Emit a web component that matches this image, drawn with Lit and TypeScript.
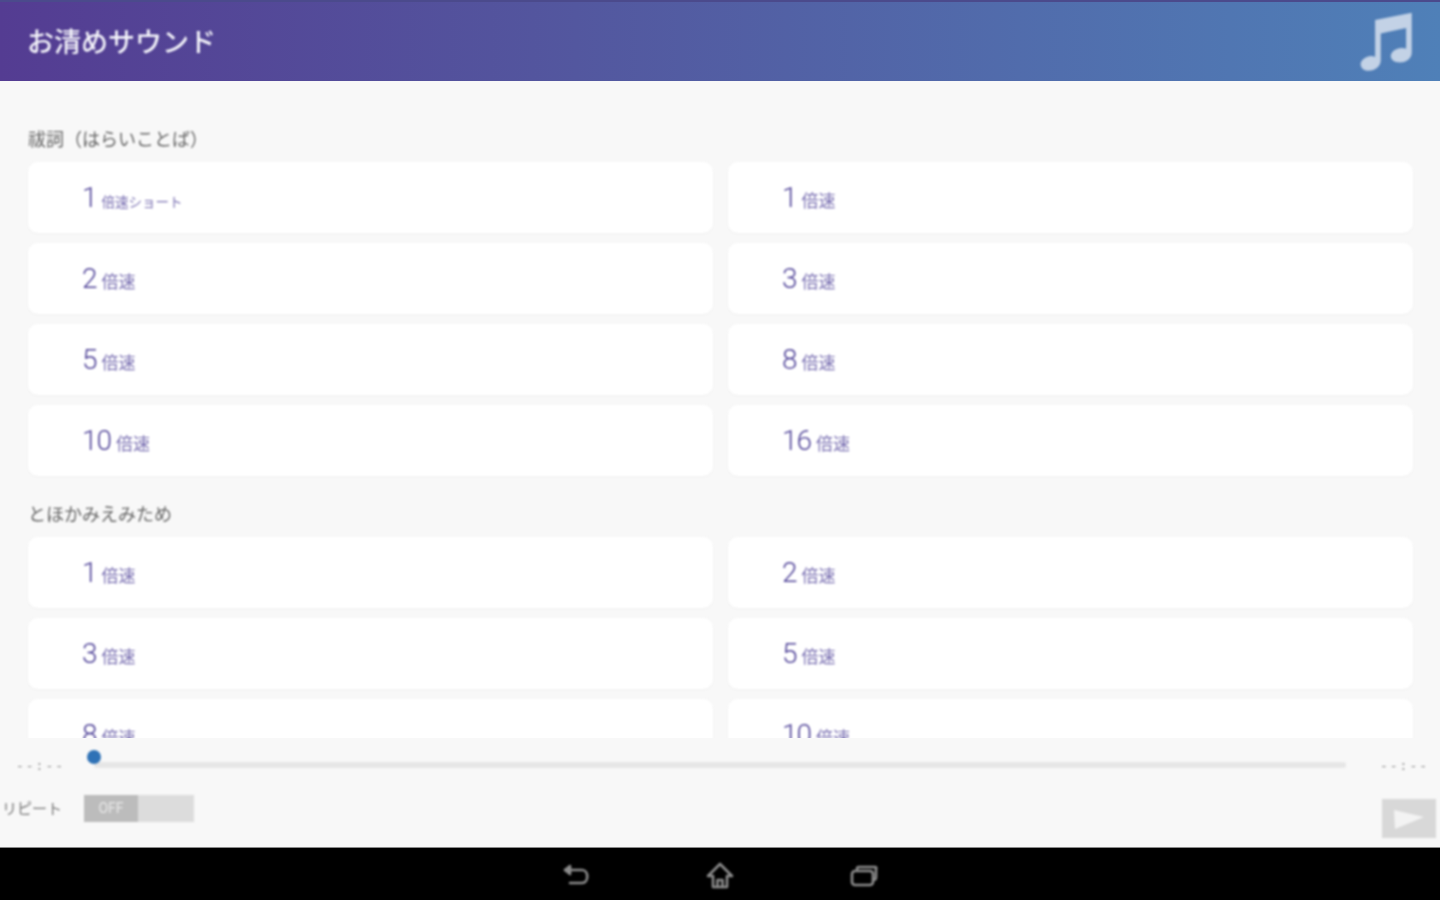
import { LitElement, html, css } from "lit";
import { customElement } from "lit/decorators.js";

type Item = { n: string; u: string; short?: boolean };
const sections: { title: string; items: Item[] }[] = [
  {
    title: "祓詞（はらいことば）",
    items: [
      { n: "1", u: "倍速ショート", short: true },
      { n: "1", u: "倍速" },
      { n: "2", u: "倍速" },
      { n: "3", u: "倍速" },
      { n: "5", u: "倍速" },
      { n: "8", u: "倍速" },
      { n: "10", u: "倍速" },
      { n: "16", u: "倍速" },
    ],
  },
  {
    title: "とほかみえみため",
    items: [
      { n: "1", u: "倍速" },
      { n: "2", u: "倍速" },
      { n: "3", u: "倍速" },
      { n: "5", u: "倍速" },
      { n: "8", u: "倍速" },
      { n: "10", u: "倍速" },
    ],
  },
];

@customElement("app-root")
export class AppRoot extends LitElement {
  static styles = css`
    :host {
      display: block;
      width: 1440px;
      height: 900px;
      overflow: hidden;
      font-family: "Noto Sans CJK JP", "Roboto", sans-serif;
      background: #f8f8f8;
    }
    .screen {
      display: flex;
      flex-direction: column;
      height: 900px;
    }
    .soft {
      filter: blur(0.8px);
    }
    .header {
      flex: 0 0 81px;
      box-sizing: border-box;
      display: flex;
      align-items: center;
      justify-content: space-between;
      padding: 0 24px 0 27px;
      background: linear-gradient(90deg, #543c92 0%, #53579f 40%, #4f80b8 100%);
      border-top: 2px solid #4b4a8c;
      color: #f4f4fa;
      font-size: 27px;
      font-weight: 500;
    }
    .header span {
      position: relative;
      top: -1px;
    }
    .note {
      width: 58px;
      height: 62px;
      display: block;
    }
    .list {
      flex: 0 0 657px;
      overflow: hidden;
      box-sizing: border-box;
      padding: 43px 27px 0 28px;
    }
    .title {
      height: 28px;
      line-height: 28px;
      font-size: 18px;
      color: #666;
      margin-bottom: 10px;
    }
    .grid {
      display: grid;
      grid-template-columns: 685px 685px;
      column-gap: 15px;
      row-gap: 10px;
      margin-bottom: 23px;
    }
    .card {
      height: 71px;
      background: #fff;
      border-radius: 10px;
      display: flex;
      align-items: center;
      padding-left: 54px;
      color: #4e4197;
      box-shadow: 0 1px 3px rgba(0, 0, 0, 0.03);
    }
    .n {
      font-family: "Roboto", sans-serif;
      font-weight: 300;
      font-size: 28px;
      letter-spacing: -1px;
      line-height: 36px;
      margin-right: 2px;
    }
    .u {
      font-size: 17px;
      line-height: 20px;
      color: #7a70b2;
      position: relative;
      top: 2px;
      margin-left: 3px;
    }
    .u.short {
      font-size: 13.5px;
      top: 3.5px;
      margin-left: 3px;
    }
    .controls {
      flex: 0 0 109px;
      display: flex;
      flex-direction: column;
    }
    .seek {
      height: 57px;
      display: flex;
      align-items: flex-start;
      padding: 20px 14px 0 16px;
      box-sizing: border-box;
    }
    .time {
      width: 46px;
      font-size: 13px;
      letter-spacing: 2px;
      color: #8e8e8e;
      line-height: 18px;
      white-space: nowrap;
      font-family: "Liberation Mono", monospace;
      overflow: hidden;
    }
    .track {
      flex: 1;
      margin: 4px 34px 0 32px;
      height: 6px;
      border-radius: 3px;
      background: #e6e6e6;
      position: relative;
    }
    .knob {
      position: absolute;
      left: -7px;
      top: -12px;
      width: 14px;
      height: 14px;
      border-radius: 50%;
      background: #2f72b6;
    }
    .row {
      flex: 1;
      display: flex;
      align-items: flex-start;
      padding-right: 4px;
    }
    .repeat {
      width: 84px;
      box-sizing: border-box;
      padding-left: 2px;
      font-size: 15px;
      color: #777;
      line-height: 26px;
      white-space: nowrap;
    }
    .toggle {
      width: 110px;
      height: 27px;
      background: #dcdcdc;
      display: flex;
    }
    .off {
      width: 54px;
      background: #bcbcbc;
      color: #e9e9e9;
      font-size: 14px;
      text-align: center;
      line-height: 27px;
      font-family: "Roboto", sans-serif;
    }
    .spacer {
      flex: 1;
    }
    .play {
      width: 54px;
      height: 39px;
      margin-top: 4px;
      background: #d8d8d8;
      display: flex;
      align-items: center;
      justify-content: center;
    }
    .play svg {
      display: block;
    }
    .nav {
      flex: 0 0 53px;
      background: #000;
      border-top: 1px solid #8a8a8a;
      box-sizing: border-box;
      display: flex;
      align-items: center;
      justify-content: center;
      gap: 114px;
    }
    .nav svg {
      display: block;
      width: 30px;
      height: 30px;
      position: relative;
      top: 2px;
      fill: none;
      stroke: #8c8c8c;
      stroke-width: 2.6;
      stroke-linejoin: round;
      stroke-linecap: round;
    }
  `;

  render() {
    return html`
      <div class="screen">
        <header class="header">
          <span class="soft">お清めサウンド</span>
          <svg class="note soft" viewBox="0 0 58 62">
            <path
              fill="#c3d2e6"
              d="M15 10 L54 2 V46 C54 54 46 58 39 57 C32 56 30 50 33 46 C36 42 43 40 48 42 V19 L21 25 V55 C21 62 13 68 5 66 C-1 64 -2 58 2 54 C6 50 11 49 15 51 Z"
              transform="translate(3 0) scale(0.94 0.9)"
            />
          </svg>
        </header>
        <main class="list">
          ${sections.map(
            (s) => html`
              <div class="title soft">${s.title}</div>
              <div class="grid soft">
                ${s.items.map(
                  (i) => html`
                    <div class="card">
                      <span class="n">${i.n}</span>
                      <span class="u ${i.short ? "short" : ""}">${i.u}</span>
                    </div>
                  `
                )}
              </div>
            `
          )}
        </main>
        <section class="controls soft">
          <div class="seek">
            <div class="time">--:--</div>
            <div class="track"><div class="knob"></div></div>
            <div class="time">--:--</div>
          </div>
          <div class="row">
            <div class="repeat">リピート</div>
            <div class="toggle"><div class="off">OFF</div></div>
            <div class="spacer"></div>
            <div class="play">
              <svg width="32" height="22" viewBox="0 0 32 22">
                <path fill="#f3f3f3" d="M1 2 L31 9 L2 21 Z" />
              </svg>
            </div>
          </div>
        </section>
        <nav class="nav">
          <svg class="soft" viewBox="0 0 30 30">
            <path d="M4 9 H21 C28 9 28 22 21 22 H9" />
            <path d="M9 5 L4 9 L9 13 Z" fill="#8c8c8c" />
          </svg>
          <svg class="soft" viewBox="0 0 30 30">
            <path d="M15 3 L27 15 H22 V26 H8 V15 H3 Z" />
            <path d="M12.5 26 V19 H17.5 V26" />
          </svg>
          <svg class="soft" viewBox="0 0 30 30">
            <path d="M8 8 Q8 6 10 6 H26 Q28 6 27 8 V16 Q27 19 24 19" />
            <rect x="3" y="10" width="21" height="14" rx="3" />
          </svg>
        </nav>
      </div>
    `;
  }
}
